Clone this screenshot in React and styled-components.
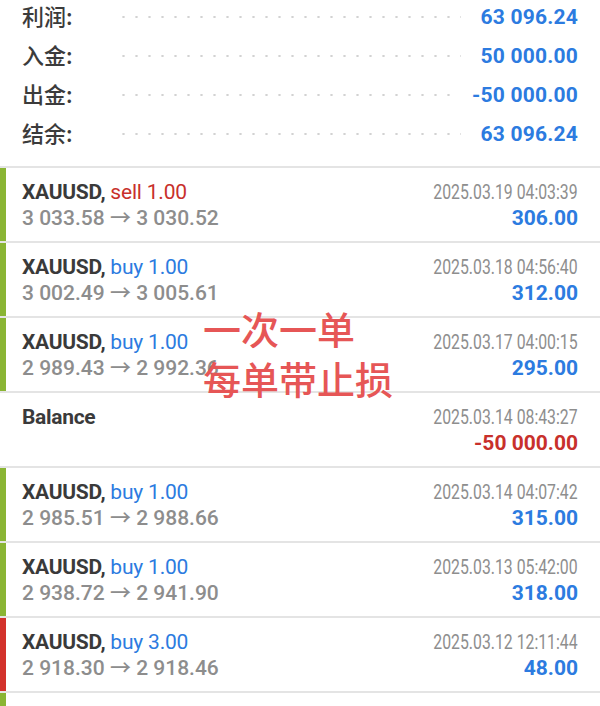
import React from "react";
import styled, { createGlobalStyle } from "styled-components";

const GlobalStyle = createGlobalStyle`
  html, body {
    margin: 0;
    padding: 0;
    background: #ffffff;
  }
  body {
    font-family: Roboto, "Noto Sans CJK SC", sans-serif;
    overflow: hidden;
  }
`;

const BLUE = "#2c7be0";
const RED = "#c8302b";
const GREEN = "#8ab534";
const BAR_RED = "#d3322b";

const Page = styled.div`
  position: relative;
  width: 600px;
  height: 706px;
  overflow: hidden;
  background: #fff;
`;

const Summary = styled.div`
  margin-top: -3px;
  padding: 0 22px 13px 22px;
  border-bottom: 2px solid #e4e4e4;
`;

const SummaryRow = styled.div`
  display: flex;
  align-items: center;
  height: 39px;
`;

const Label = styled.span`
  font-family: "Noto Sans CJK SC", sans-serif;
  font-size: 22px;
  line-height: 26px;
  font-weight: 500;
  color: #3b3b3b;
  width: 95px;
  flex-shrink: 0;
  margin-top: -3px;
`;

const Dots = styled.span`
  flex: 1;
  height: 4px;
  margin-right: 20px;
  background-image: radial-gradient(circle, #d2d2d2 1px, transparent 1.3px);
  background-size: 13px 4px;
  background-repeat: repeat-x;
`;

const SummaryValue = styled.span`
  font-size: 21px;
  font-weight: 700;
  color: ${BLUE};
  letter-spacing: 0.2px;
`;

const Row = styled.div`
  display: flex;
  height: 73px;
  border-bottom: 2px solid #e4e4e4;
`;

const Bar = styled.div`
  width: 6px;
  flex-shrink: 0;
  background: ${p => p.color || "transparent"};
`;

const RowBody = styled.div`
  flex: 1;
  display: flex;
  justify-content: space-between;
  padding: 11px 22px 0 16px;
`;

const Col = styled.div`
  display: flex;
  flex-direction: column;
  align-items: ${p => (p.right ? "flex-end" : "flex-start")};
`;

const Line = styled.div`
  height: 26px;
  line-height: 26px;
  font-size: 21px;
  white-space: nowrap;
`;

const Symbol = styled.span`
  font-weight: 700;
  color: #3a3a3a;
  letter-spacing: -0.3px;
`;

const Side = styled.span`
  color: ${p => (p.side === "sell" ? RED : BLUE)};
  letter-spacing: -0.2px;
`;

const Prices = styled(Line)`
  font-weight: 500;
  color: #8d8d8d;
`;

const DateText = styled.span`
  display: inline-block;
  font-size: 20px;
  color: #8e8e8e;
  transform: scaleX(0.79);
  transform-origin: right center;
`;

const Profit = styled(Line)`
  font-weight: 700;
  color: ${p => (p.negative ? RED : BLUE)};
`;

const Stamp = styled.div`
  position: absolute;
  left: 203px;
  top: 303px;
  font-family: "Noto Sans CJK SC", sans-serif;
  font-size: 38px;
  font-weight: 500;
  line-height: 50px;
  color: #e65656;
  pointer-events: none;
`;

const summary = [
  ["利润:", "63 096.24"],
  ["入金:", "50 000.00"],
  ["出金:", "-50 000.00"],
  ["结余:", "63 096.24"],
];

const deals = [
  { side: "sell", lots: "1.00", open: "3 033.58", close: "3 030.52", time: "2025.03.19 04:03:39", profit: "306.00", bar: GREEN },
  { side: "buy", lots: "1.00", open: "3 002.49", close: "3 005.61", time: "2025.03.18 04:56:40", profit: "312.00", bar: GREEN },
  { side: "buy", lots: "1.00", open: "2 989.43", close: "2 992.36", time: "2025.03.17 04:00:15", profit: "295.00", bar: GREEN },
  { balance: true, time: "2025.03.14 08:43:27", profit: "-50 000.00" },
  { side: "buy", lots: "1.00", open: "2 985.51", close: "2 988.66", time: "2025.03.14 04:07:42", profit: "315.00", bar: GREEN },
  { side: "buy", lots: "1.00", open: "2 938.72", close: "2 941.90", time: "2025.03.13 05:42:00", profit: "318.00", bar: GREEN },
  { side: "buy", lots: "3.00", open: "2 918.30", close: "2 918.46", time: "2025.03.12 12:11:44", profit: "48.00", bar: BAR_RED },
];

export default function App() {
  return (
    <Page>
      <GlobalStyle />
      <Summary>
        {summary.map(([label, value]) => (
          <SummaryRow key={label}>
            <Label>{label}</Label>
            <Dots />
            <SummaryValue>{value}</SummaryValue>
          </SummaryRow>
        ))}
      </Summary>
      {deals.map((d, i) => (
        <Row key={i}>
          <Bar color={d.bar} />
          <RowBody>
            <Col>
              {d.balance ? (
                <Line>
                  <Symbol>Balance</Symbol>
                </Line>
              ) : (
                <>
                  <Line>
                    <Symbol>XAUUSD, </Symbol>
                    <Side side={d.side}>
                      {d.side} {d.lots}
                    </Side>
                  </Line>
                  <Prices>
                    {d.open} → {d.close}
                  </Prices>
                </>
              )}
            </Col>
            <Col right>
              <Line>
                <DateText>{d.time}</DateText>
              </Line>
              <Profit negative={d.profit.startsWith("-")}>{d.profit}</Profit>
            </Col>
          </RowBody>
        </Row>
      ))}
      <Row>
        <Bar color={GREEN} />
      </Row>
      <Stamp>
        一次一单
        <br />
        每单带止损
      </Stamp>
    </Page>
  );
}
